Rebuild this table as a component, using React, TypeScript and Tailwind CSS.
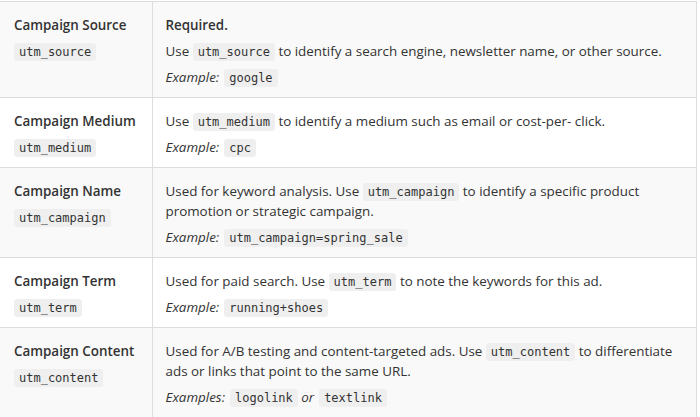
import React from 'react'

const Code: React.FC<{ children: React.ReactNode }> = ({ children }) => (
    <code className="bg-[#efefef] rounded-[3px] px-[5px] py-[2px] text-[12px] leading-[12px] text-[#333] font-['DejaVu_Sans_Mono','Liberation_Mono',monospace] [box-decoration-break:clone]">
        {children}
    </code>
)

const Ex: React.FC<{ children: React.ReactNode }> = ({ children }) => (
    <em className="italic mr-[5px]">{children}</em>
)

const rows = [
    {
        name: 'Campaign Source',
        param: 'utm_source',
        body: (
            <>
                <p className="font-semibold">Required.</p>
                <p>
                    Use <Code>utm_source</Code> to identify a search engine, newsletter name, or other source.
                </p>
                <p>
                    <Ex>Example:</Ex>
                    <Code>google</Code>
                </p>
            </>
        ),
    },
    {
        name: 'Campaign Medium',
        param: 'utm_medium',
        body: (
            <>
                <p>
                    Use <Code>utm_medium</Code> to identify a medium such as email or cost-per- click.
                </p>
                <p>
                    <Ex>Example:</Ex>
                    <Code>cpc</Code>
                </p>
            </>
        ),
    },
    {
        name: 'Campaign Name',
        param: 'utm_campaign',
        body: (
            <>
                <p>
                    Used for keyword analysis. Use <Code>utm_campaign</Code> to identify a specific product promotion or strategic campaign.
                </p>
                <p>
                    <Ex>Example:</Ex>
                    <Code>utm_campaign=spring_sale</Code>
                </p>
            </>
        ),
    },
    {
        name: 'Campaign Term',
        param: 'utm_term',
        body: (
            <>
                <p>
                    Used for paid search. Use <Code>utm_term</Code> to note the keywords for this ad.
                </p>
                <p>
                    <Ex>Example:</Ex>
                    <Code>running+shoes</Code>
                </p>
            </>
        ),
    },
    {
        name: 'Campaign Content',
        param: 'utm_content',
        body: (
            <>
                <p>
                    Used for A/B testing and content-targeted ads. Use <Code>utm_content</Code> to differentiate ads or links that point to the same URL.
                </p>
                <p>
                    <Ex>Examples:</Ex>
                    <Code>logolink</Code> <Ex>or</Ex>
                    <Code>textlink</Code>
                </p>
            </>
        ),
    },
]

const App: React.FC = () => {
    return (
        <div className="w-[700px] h-[417px] overflow-hidden bg-white font-['Open_Sans',sans-serif] text-[13.4px] leading-[20px] text-[#333]">
            <table className="w-[697px] border-collapse mt-px">
                <tbody>
                    {rows.map((row, i) => (
                        <tr
                            key={row.param}
                            className={(i % 2 === 0 ? 'bg-[#f9f9f9]' : 'bg-white') + ' border-t border-[#dddddd]'}
                        >
                            <td className="w-[152px] align-top pl-[14px] pr-[10px] pt-[13px] pb-[10px] border-r border-[#dddddd]">
                                <div className="flex flex-col gap-[6px]">
                                    <p className="font-semibold">{row.name}</p>
                                    <p>
                                        <Code>{row.param}</Code>
                                    </p>
                                </div>
                            </td>
                            <td className="align-top pl-[13px] pr-[13px] pt-[13px] pb-[10px] border-r border-[#dddddd]">
                                <div className="flex flex-col gap-[6px]">{row.body}</div>
                            </td>
                        </tr>
                    ))}
                </tbody>
            </table>
        </div>
    )
}

export default App
